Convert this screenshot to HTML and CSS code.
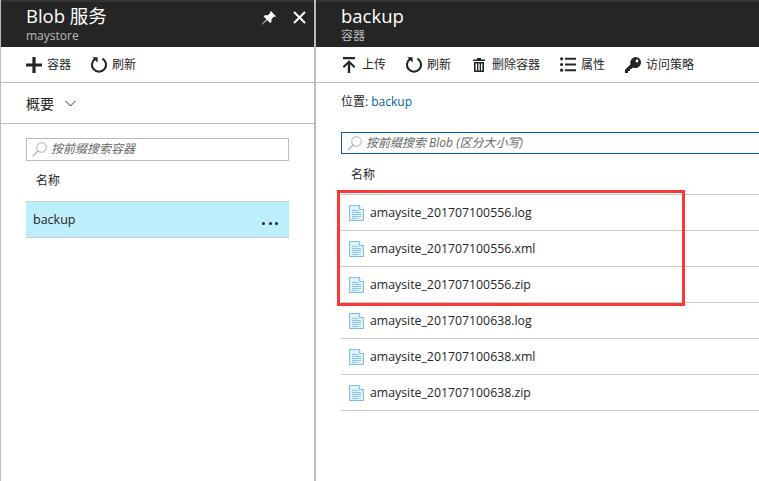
FILE: index.html
```html
<!DOCTYPE html>
<html lang="en">

<head>
    <meta charset="UTF-8">
    <title>Blob 服务</title>
    <link rel="stylesheet" href="styles.css">
</head>

<body>

    <svg class="defs" width="0" height="0">
        <symbol id="i-refresh" viewBox="0 0 16 17">
            <path d="M4.6 2.6A7 7 0 1 0 11.4 2.6" fill="none" stroke="currentColor" stroke-width="2.1" />
            <path d="M1.2 1.2H6.6V6.6Z" fill="currentColor" />
        </symbol>
        <symbol id="i-file" viewBox="0 0 15 16">
            <path d="M.5.5H10.5L14.5 4.500V15.500H.5Z" fill="#dff1fa" stroke="#7cc0e2" />
            <path d="M10.500.5V4.500H14.500" fill="#fff" stroke="#7cc0e2" />
            <path d="M3 5.500H9M3 7.500H12M3 9.500H12M3 11.500H12M3 13.500H9" fill="none" stroke="#8cc9e8" />
        </symbol>
    </svg>

    <div class="page">
        <!-- 左侧面板 -->
        <div class="pane pane_left">
            <div class="head">
                <div>
                    <div class="head_title">Blob 服务</div>
                    <div class="head_sub">maystore</div>
                </div>
                <div class="head_btns">
                    <svg width="16" height="16" viewBox="0 0 16 16">
                        <path d="M9.8 1 15 6.200 13.900 7 13 6.600 10.500 9.200 10.400 12 9.200 13 6.100 9.900 1.400 14.600.9 14.200 5.500 9.300 2.600 6.400 3.900 5.300 6.800 5.300 9.400 2.800 9 1.900Z" fill="#fff" />
                    </svg>
                    <svg width="13" height="13" viewBox="0 0 13 13">
                        <path d="M1 1 12 12M12 1 1 12" stroke="#fff" stroke-width="2" />
                    </svg>
                </div>
            </div>
            <div class="toolbar">
                <div class="tool">
                    <svg width="16" height="16" viewBox="0 0 16 16">
                        <path d="M6.400 0H9.600V6.400H16V9.600H9.600V16H6.400V9.600H0V6.400H6.400Z" fill="#252525" />
                    </svg><span class="tool_text">容器</span>
                </div>
                <div class="tool">
                    <svg width="16" height="17"><use href="#i-refresh" /></svg><span class="tool_text">刷新</span>
                </div>
            </div>
            <div class="summary">概要
                <svg width="11" height="7" viewBox="0 0 11 7">
                    <path d="M.5 1 5.500 6 10.500 1" fill="none" stroke="#333" />
                </svg>
            </div>
            <div class="left_body">
                <div class="search">
                    <svg width="15" height="15" viewBox="0 0 15 15">
                        <circle cx="9.500" cy="5.500" r="4.800" fill="none" stroke="#aaa" />
                        <path d="M6 9 .7 14.300" stroke="#aaa" stroke-width="1.200" />
                    </svg>
                    <span class="search_text search_text_left">按前缀搜索容器</span>
                </div>
                <div class="col_name">名称</div>
                <div class="container_row">
                    <span class="container_name">backup</span>
                    <span class="more"><i></i><i></i><i></i></span>
                </div>
            </div>
        </div>

        <!-- 右侧面板 -->
        <div class="pane pane_right">
            <div class="head">
                <div>
                    <div class="head_title">backup</div>
                    <div class="head_sub">容器</div>
                </div>
            </div>
            <div class="toolbar">
                <div class="tool">
                    <svg class="ico_upload" width="14" height="16" viewBox="0 0 14 16">
                        <path d="M1 0H13V2.200H1ZM7 3.200 13.400 9.400 11.900 10.900 8.200 7.300V16H5.800V7.300L2.100 10.900.6 9.400Z" fill="#252525" />
                    </svg><span class="tool_text">上传</span>
                </div>
                <div class="tool">
                    <svg width="16" height="17"><use href="#i-refresh" /></svg><span class="tool_text">刷新</span>
                </div>
                <div class="tool">
                    <svg class="ico_trash" width="12" height="14" viewBox="0 0 12 14">
                        <path d="M4 0H8V1.500H12V3H0V1.500H4ZM1 4H11V14H1ZM2.600 5.400V12.600H4V5.400ZM5.300 5.400V12.600H6.700V5.400ZM8 5.400V12.600H9.400V5.400Z" fill="#252525" fill-rule="evenodd" />
                    </svg><span class="tool_text">删除容器</span>
                </div>
                <div class="tool">
                    <svg width="16" height="15" viewBox="0 0 16 15">
                        <circle cx="1.600" cy="1.800" r="1.600" fill="#252525" />
                        <circle cx="1.600" cy="7.500" r="1.600" fill="#252525" />
                        <circle cx="1.600" cy="13.200" r="1.600" fill="#252525" />
                        <path d="M5 .8H16V2.800H5ZM5 6.500H16V8.500H5ZM5 12.200H16V14.200H5Z" fill="#252525" />
                    </svg><span class="tool_text">属性</span>
                </div>
                <div class="tool">
                    <svg width="16" height="16" viewBox="0 0 16 16">
                        <path d="M10.500 0A5.500 5.500 0 1 1 8 10.400L6.500 12H5V14H3V16H0V12.800L5.600 7.300A5.500 5.500 0 0 1 10.500 0ZM12 2.600A1.400 1.400 0 1 0 12 5.400 1.400 1.400 0 1 0 12 2.600Z" fill="#252525" fill-rule="evenodd" />
                    </svg><span class="tool_text">访问策略</span>
                </div>
            </div>
            <div class="right_body">
                <div class="location">位置: <a class="loc_link">backup</a></div>
                <div class="search search_right">
                    <svg width="15" height="15" viewBox="0 0 15 15">
                        <circle cx="9.500" cy="5.500" r="4.800" fill="none" stroke="#aaa" />
                        <path d="M6 9 .7 14.300" stroke="#aaa" stroke-width="1.200" />
                    </svg>
                    <span class="search_text">按前缀搜索 Blob (区分大小写)</span>
                </div>
                <div class="col_name col_name_right">名称</div>
                <div class="file_list">
                    <div class="file_row"><svg width="15" height="16"><use href="#i-file" /></svg>amaysite_201707100556.log</div>
                    <div class="file_row"><svg width="15" height="16"><use href="#i-file" /></svg>amaysite_201707100556.xml</div>
                    <div class="file_row"><svg width="15" height="16"><use href="#i-file" /></svg>amaysite_201707100556.zip</div>
                    <div class="file_row"><svg width="15" height="16"><use href="#i-file" /></svg>amaysite_201707100638.log</div>
                    <div class="file_row"><svg width="15" height="16"><use href="#i-file" /></svg>amaysite_201707100638.xml</div>
                    <div class="file_row"><svg width="15" height="16"><use href="#i-file" /></svg>amaysite_201707100638.zip</div>
                    <!-- 红框标注 -->
                    <div class="mark"></div>
                </div>
            </div>
        </div>
    </div>

</body>

</html>
```

FILE: styles.css
```css
html,
body {
    margin: 0;
    padding: 0;
    height: 100%;
    overflow: hidden;
    background-color: #fff;
}

body {
    font-family: "Open Sans", "Noto Sans CJK SC", sans-serif;
    font-size: 12px;
    color: #252525;
}

.defs {
    position: absolute;
}

.page {
    display: flex;
    height: 481px;
}

.pane_left {
    width: 313px;
    flex: none;
    border-left: 1px solid #bbb;
    border-right: 2px solid #bbb;
}

.pane_right {
    flex: 1;
    min-width: 0;
}

.head {
    box-sizing: border-box;
    height: 47px;
    padding: 1px 8px 0 25px;
    border-top: 2px solid #333;
    background-color: #252525;
    display: flex;
    justify-content: space-between;
}

.head_title {
    font-size: 18.5px;
    line-height: 26px;
    color: #fff;
}

.head_sub {
    font-size: 12px;
    line-height: 14px;
    color: #bbb;
}

.head_btns {
    display: flex;
    align-items: center;
    gap: 16px;
    padding-bottom: 15px;
}

.toolbar {
    box-sizing: border-box;
    height: 36px;
    padding-left: 25px;
    border-bottom: 1px solid #bbb;
    display: flex;
    align-items: center;
    gap: 20px;
}

.tool {
    display: flex;
    align-items: center;
    gap: 5px;
}

.tool_text {
    padding-bottom: 2px;
}

.ico_upload {
    margin-left: 1px;
    margin-right: 1px;
}

.ico_trash {
    margin-left: 2px;
    margin-right: 2px;
}

.summary {
    box-sizing: border-box;
    height: 41px;
    padding-left: 25px;
    border-bottom: 1px solid #bbb;
    font-size: 14px;
    display: flex;
    align-items: center;
    gap: 11px;
}

.left_body {
    padding: 14px 25px 0;
}

.search {
    box-sizing: border-box;
    height: 23px;
    border: 1px solid #bbb;
    padding-left: 5px;
    display: flex;
    align-items: center;
    gap: 4px;
    font-style: italic;
    color: #666;
}

.search_text {
    padding-bottom: 2px;
}

.search_text_left {
    padding-bottom: 4px;
}

.search_right {
    height: 22px;
    border-color: #0060a8;
    border-right: 0;
}

.col_name {
    padding-left: 10px;
    line-height: 40px;
}

.col_name_right {
    padding-top: 1px;
    line-height: 39px;
}

.container_row {
    box-sizing: border-box;
    height: 37px;
    padding: 0 11px 0 7px;
    background-color: #bdeefb;
    border-top: 1px solid #ccc;
    border-bottom: 1px solid #ccc;
    display: flex;
    align-items: center;
    justify-content: space-between;
}

.container_name {
    font-size: 12.5px;
}

.more {
    display: flex;
    gap: 3.5px;
    padding-top: 7px;
}

.more i {
    display: block;
    width: 3px;
    height: 3px;
    border-radius: 50%;
    background-color: #252525;
}

.right_body {
    padding: 0 0 0 25px;
}

.location {
    padding-top: 12px;
    line-height: 14px;
    height: 37px;
}

.loc_link {
    color: #0060a8;
}

.file_list {
    position: relative;
}

.file_row {
    box-sizing: border-box;
    height: 36px;
    padding-left: 8px;
    border-top: 1px solid #ccc;
    font-size: 12.3px;
    display: flex;
    align-items: center;
    gap: 6px;
}

.file_row:nth-child(6) {
    height: 37px;
    border-bottom: 1px solid #ccc;
}

.mark {
    position: absolute;
    left: -4px;
    top: -4px;
    width: 342px;
    height: 110px;
    border: 3px solid #fb3838;
}
```
